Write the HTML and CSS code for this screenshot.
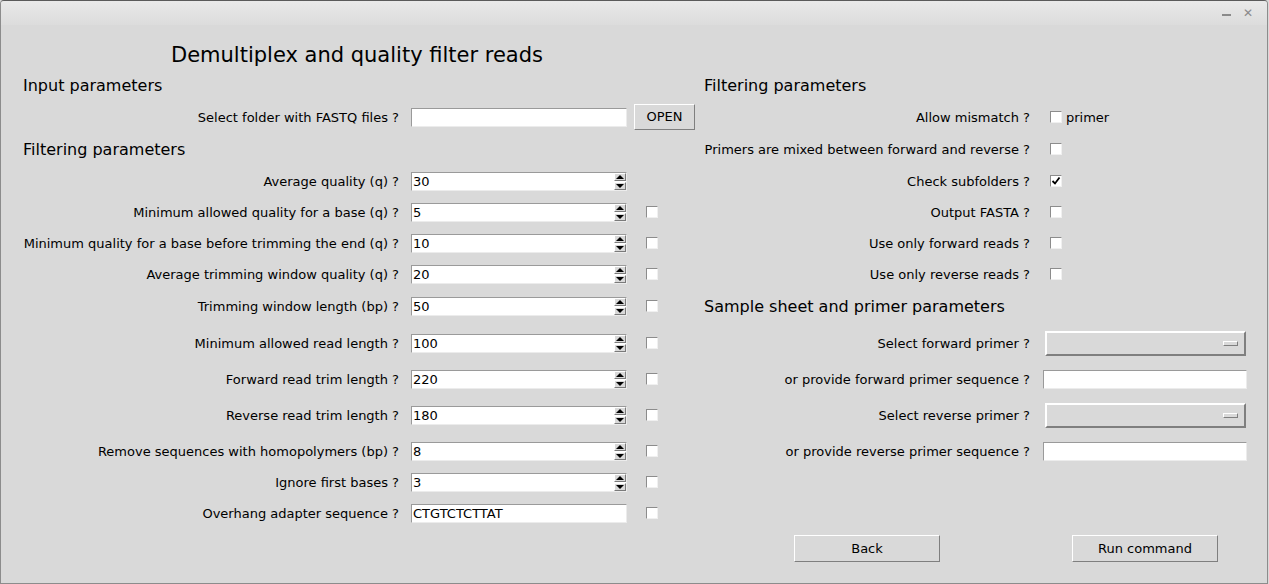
FILE: index.html
```html
<!DOCTYPE html>
<html>
<head>
<meta charset="utf-8">
<link rel="stylesheet" href="styles.css">
</head>
<body>
<div class="window">
  <div class="titlebar">
    <span class="tb-btn tb-min"></span>
    <span class="tb-btn tb-close">✕</span>
  </div>
  <div class="content">
    <div class="title">Demultiplex and quality filter reads</div>
    <div class="panels">
      <div class="panel left">
        <div class="heading">Input parameters</div>
        <div class="lbl">Select folder with FASTQ files ?</div>
        <div class="entry"></div>
        <div class="extra"><button class="btn btn-open">OPEN</button></div>

        <div class="heading">Filtering parameters</div>

        <div class="lbl">Average quality (q) ?</div>
        <div class="entry spin"><span class="val">30</span><span class="arrows"><span class="arr up"></span><span class="arr down"></span></span></div>
        <div class="extra"></div>

        <div class="lbl">Minimum allowed quality for a base (q) ?</div>
        <div class="entry spin"><span class="val">5</span><span class="arrows"><span class="arr up"></span><span class="arr down"></span></span></div>
        <div class="extra"><span class="check"></span></div>

        <div class="lbl">Minimum quality for a base before trimming the end (q) ?</div>
        <div class="entry spin"><span class="val">10</span><span class="arrows"><span class="arr up"></span><span class="arr down"></span></span></div>
        <div class="extra"><span class="check"></span></div>

        <div class="lbl">Average trimming window quality (q) ?</div>
        <div class="entry spin"><span class="val">20</span><span class="arrows"><span class="arr up"></span><span class="arr down"></span></span></div>
        <div class="extra"><span class="check"></span></div>

        <div class="lbl">Trimming window length (bp) ?</div>
        <div class="entry spin"><span class="val">50</span><span class="arrows"><span class="arr up"></span><span class="arr down"></span></span></div>
        <div class="extra"><span class="check"></span></div>

        <div class="lbl">Minimum allowed read length ?</div>
        <div class="entry spin"><span class="val">100</span><span class="arrows"><span class="arr up"></span><span class="arr down"></span></span></div>
        <div class="extra"><span class="check"></span></div>

        <div class="lbl">Forward read trim length ?</div>
        <div class="entry spin"><span class="val">220</span><span class="arrows"><span class="arr up"></span><span class="arr down"></span></span></div>
        <div class="extra"><span class="check"></span></div>

        <div class="lbl">Reverse read trim length ?</div>
        <div class="entry spin"><span class="val">180</span><span class="arrows"><span class="arr up"></span><span class="arr down"></span></span></div>
        <div class="extra"><span class="check"></span></div>

        <div class="lbl">Remove sequences with homopolymers (bp) ?</div>
        <div class="entry spin"><span class="val">8</span><span class="arrows"><span class="arr up"></span><span class="arr down"></span></span></div>
        <div class="extra"><span class="check"></span></div>

        <div class="lbl">Ignore first bases ?</div>
        <div class="entry spin"><span class="val">3</span><span class="arrows"><span class="arr up"></span><span class="arr down"></span></span></div>
        <div class="extra"><span class="check"></span></div>

        <div class="lbl">Overhang adapter sequence ?</div>
        <div class="entry"><span class="val">CTGTCTCTTAT</span></div>
        <div class="extra"><span class="check"></span></div>
      </div>

      <div class="panel right">
        <div class="heading">Filtering parameters</div>

        <div class="lbl">Allow mismatch ?</div>
        <div class="ctl"><span class="check"></span><span class="ctext">primer</span></div>

        <div class="lbl">Primers are mixed between forward and reverse ?</div>
        <div class="ctl"><span class="check"></span></div>

        <div class="lbl">Check subfolders ?</div>
        <div class="ctl"><span class="check checked"><svg width="10" height="10" viewBox="0 0 10 10"><path d="M1.5 5 L4 7.5 L8.5 1.5" fill="none" stroke="#000" stroke-width="1.8"/></svg></span></div>

        <div class="lbl">Output FASTA ?</div>
        <div class="ctl"><span class="check"></span></div>

        <div class="lbl">Use only forward reads ?</div>
        <div class="ctl"><span class="check"></span></div>

        <div class="lbl">Use only reverse reads ?</div>
        <div class="ctl"><span class="check"></span></div>

        <div class="heading">Sample sheet and primer parameters</div>

        <div class="lbl">Select forward primer ?</div>
        <div class="ctl"><span class="combo"><span class="indicator"></span></span></div>

        <div class="lbl">or provide forward primer sequence ?</div>
        <div class="ctl"><span class="entry wide"></span></div>

        <div class="lbl">Select reverse primer ?</div>
        <div class="ctl"><span class="combo"><span class="indicator"></span></span></div>

        <div class="lbl">or provide reverse primer sequence ?</div>
        <div class="ctl"><span class="entry wide"></span></div>

        <div class="spacer"></div>
        <div class="spacer"></div>

        <div class="actions">
          <button class="btn btn-action">Back</button>
          <button class="btn btn-action">Run command</button>
        </div>
      </div>
    </div>
  </div>
</div>
</body>
</html>
```

FILE: styles.css
```css
* { box-sizing: border-box; }

html, body {
  margin: 0;
  padding: 0;
  background: #d9d9d9;
}

body {
  font-family: "DejaVu Sans", "Noto Sans", sans-serif;
  font-size: 13px;
  color: #000;
}

.window {
  width: 1268px;
  height: 584px;
  background: #d9d9d9;
  border: 1px solid #8c8c8c;
  border-top-color: #5a5a5a;
  border-radius: 4px 4px 0 0;
  overflow: hidden;
}

.titlebar {
  height: 24px;
  background: linear-gradient(#e9e9e9, #dcdcdc);
  display: flex;
  justify-content: flex-end;
  align-items: center;
  padding-right: 14px;
  gap: 12px;
}

.tb-btn {
  color: #8a8a8a;
  font-size: 12px;
  font-weight: bold;
  line-height: 1;
}

.tb-min {
  width: 9px;
  height: 2px;
  background: #8a8a8a;
  margin-top: 4px;
}

.content {
  display: flex;
  flex-direction: column;
}

.title {
  width: 712px;
  height: 44px;
  padding-top: 16px;
  line-height: 28px;
  font-size: 21px;
  text-align: center;
}

.panels {
  display: flex;
}

.panel {
  display: grid;
  grid-template-rows: 32px 32px 32px 32px 30px 32px 30px 34px 40px 32px 40px 32px 30px 32px 38px;
  align-items: center;
}

.left {
  width: 703px;
  grid-template-columns: 410px 216px 1fr;
}

.right {
  width: 563px;
  grid-template-columns: 339px 1fr;
}

.heading {
  grid-column: 1 / -1;
  font-size: 16px;
  line-height: 20px;
  padding-top: 2px;
}

.left .heading {
  padding-left: 22px;
}

.lbl {
  text-align: right;
  padding-right: 12px;
  padding-top: 2px;
  white-space: nowrap;
  line-height: 16px;
}

.right .lbl {
  padding-right: 13px;
}

.entry {
  display: flex;
  align-items: center;
  height: 19px;
  background: #fff;
  border: 1px solid;
  border-color: #9a9a9a #ececec #ececec #9a9a9a;
}

.entry.wide {
  width: 204px;
}

.val {
  padding-left: 1px;
  padding-top: 1px;
  line-height: 16px;
}

.spin {
  justify-content: space-between;
}

.arrows {
  display: flex;
  flex-direction: column;
  width: 12px;
  height: 17px;
  gap: 1px;
}

.arr {
  flex: 1;
  background: #d9d9d9;
  border: 1px solid;
  border-color: #fff #7a7a7a #7a7a7a #fff;
  display: flex;
  align-items: center;
  justify-content: center;
}

.arr::after {
  content: "";
  width: 0;
  height: 0;
  border-left: 4px solid transparent;
  border-right: 4px solid transparent;
}

.arr.up::after {
  border-bottom: 4px solid #000;
}

.arr.down::after {
  border-top: 4px solid #000;
}

.extra {
  display: flex;
  align-items: center;
  height: 100%;
}

.extra .check {
  margin-left: 19px;
}

.check {
  display: inline-flex;
  align-items: center;
  justify-content: center;
  width: 12px;
  height: 12px;
  background: #fff;
  border: 1px solid;
  border-color: #8c8c8c #f0f0f0 #f0f0f0 #8c8c8c;
}

.ctl {
  display: flex;
  align-items: center;
}

.ctl .check {
  margin-left: 7px;
}

.ctext {
  margin-left: 4px;
  padding-top: 2px;
  line-height: 16px;
}

.combo {
  margin-left: 2px;
  width: 201px;
  height: 25px;
  background: #d9d9d9;
  border: 2px solid;
  border-color: #fff #7f7f7f #7f7f7f #fff;
  display: flex;
  align-items: center;
  justify-content: flex-end;
  padding-right: 6px;
}

.indicator {
  width: 15px;
  height: 5px;
  border: 1px solid;
  border-color: #fff #7f7f7f #7f7f7f #fff;
  background: #d9d9d9;
}

.btn {
  font-family: "DejaVu Sans", "Noto Sans", sans-serif;
  font-size: 13px;
  color: #000;
  background: #d9d9d9;
  border: 1px solid;
  border-color: #fff #7f7f7f #7f7f7f #fff;
  padding: 0;
  margin: 0;
  line-height: 16px;
}

.btn-open {
  margin-left: 7px;
  width: 61px;
  height: 26px;
}

.spacer {
  grid-column: 1 / -1;
}

.actions {
  grid-column: 1 / -1;
  align-self: start;
  display: flex;
  padding-top: 6px;
  padding-left: 90px;
  gap: 132px;
}

.btn-action {
  width: 146px;
  height: 27px;
}
```
